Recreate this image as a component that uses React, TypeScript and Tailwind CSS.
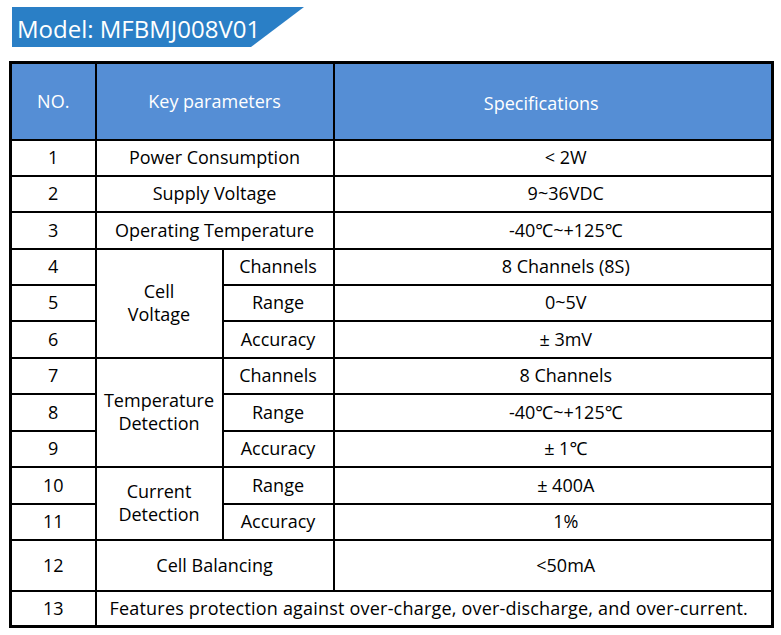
const font = { fontFamily: '"Open Sans", "Noto Sans", sans-serif' };

const cell = "border-2 border-black text-center align-middle px-1";
const spec = "border-2 border-black text-center align-middle pl-[30px] pr-1";

const App = () => {
  return (
    <div className="w-[781px] h-[635px] bg-white text-black" style={font}>
      <div className="pt-[7px] pl-[12px]">
        <div className="w-[292px] h-[40px] bg-[#2a7fc6] text-white text-[24px] leading-[40px] pl-[5px] pt-[2px] [clip-path:polygon(0_0,100%_0,calc(100%-53px)_100%,0_100%)]">
          Model: MFBMJ008V01
        </div>
      </div>

      <div className="pt-[14px] pl-[9px]">
        <table className="w-[765px] table-fixed border-collapse border-[3px] border-black text-[18px] leading-[23px]">
          <colgroup>
            <col className="w-[85px]" />
            <col className="w-[127px]" />
            <col className="w-[111px]" />
            <col />
          </colgroup>
          <thead>
            <tr className="h-[77px] bg-[#558ed5] text-white">
              <th className={`${cell} font-normal`}>NO.</th>
              <th colSpan={2} className={`${cell} font-normal`}>
                Key parameters
              </th>
              <th className={`${cell} font-normal pt-[4px] pr-[27px]`}>Specifications</th>
            </tr>
          </thead>
          <tbody>
            <tr className="h-[36px]">
              <td className={cell}>1</td>
              <td colSpan={2} className={cell}>Power Consumption</td>
              <td className={spec}>&lt; 2W</td>
            </tr>
            <tr className="h-[36px]">
              <td className={cell}>2</td>
              <td colSpan={2} className={cell}>Supply Voltage</td>
              <td className={spec}>9~36VDC</td>
            </tr>
            <tr className="h-[37px]">
              <td className={cell}>3</td>
              <td colSpan={2} className={cell}>Operating Temperature</td>
              <td className={spec}>-40℃~+125℃</td>
            </tr>

            <tr className="h-[36px]">
              <td className={cell}>4</td>
              <td rowSpan={3} className={cell}>
                Cell
                <br />
                Voltage
              </td>
              <td className={cell}>Channels</td>
              <td className={spec}>8 Channels (8S)</td>
            </tr>
            <tr className="h-[36px]">
              <td className={cell}>5</td>
              <td className={cell}>Range</td>
              <td className={spec}>0~5V</td>
            </tr>
            <tr className="h-[37px]">
              <td className={cell}>6</td>
              <td className={cell}>Accuracy</td>
              <td className={spec}>± 3mV</td>
            </tr>

            <tr className="h-[36px]">
              <td className={cell}>7</td>
              <td rowSpan={3} className={cell}>
                Temperature
                <br />
                Detection
              </td>
              <td className={cell}>Channels</td>
              <td className={spec}>8 Channels</td>
            </tr>
            <tr className="h-[37px]">
              <td className={cell}>8</td>
              <td className={cell}>Range</td>
              <td className={spec}>-40℃~+125℃</td>
            </tr>
            <tr className="h-[36px]">
              <td className={cell}>9</td>
              <td className={cell}>Accuracy</td>
              <td className={spec}>± 1℃</td>
            </tr>

            <tr className="h-[37px]">
              <td className={cell}>10</td>
              <td rowSpan={2} className={cell}>
                Current
                <br />
                Detection
              </td>
              <td className={cell}>Range</td>
              <td className={spec}>± 400A</td>
            </tr>
            <tr className="h-[36px]">
              <td className={cell}>11</td>
              <td className={cell}>Accuracy</td>
              <td className={spec}>1%</td>
            </tr>

            <tr className="h-[51px]">
              <td className={cell}>12</td>
              <td colSpan={2} className={cell}>Cell Balancing</td>
              <td className={spec}>&lt;50mA</td>
            </tr>
            <tr className="h-[36px]">
              <td className={cell}>13</td>
              <td colSpan={3} className={`${cell} pr-[14px] tracking-[0.2px]`}>
                Features protection against over-charge, over-discharge, and over-current.
              </td>
            </tr>
          </tbody>
        </table>
      </div>
    </div>
  );
};

export default App;
